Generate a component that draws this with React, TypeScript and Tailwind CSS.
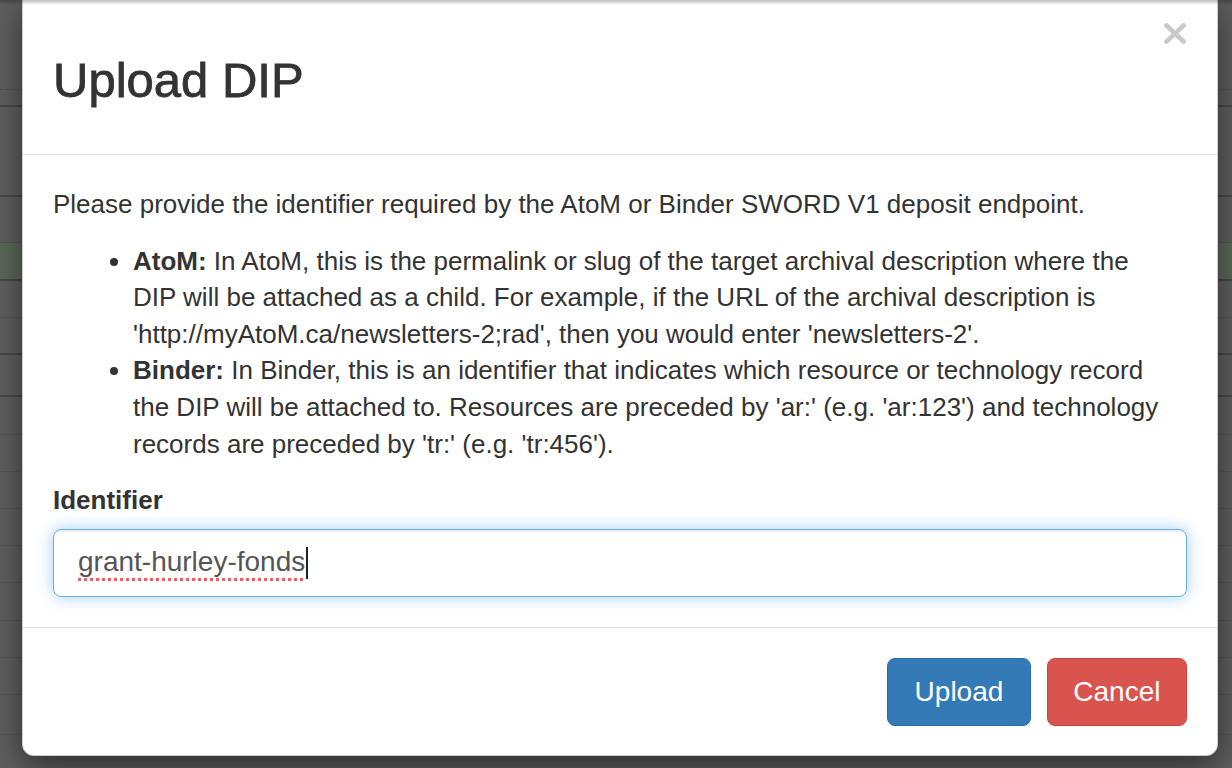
import type React from 'react';

const rows: { h: number; line: string }[] = [
  { h: 90, line: 'border-b border-dotted border-[#4a4a4a]' },
  { h: 17, line: 'border-b-2 border-[#474747]' },
  { h: 90, line: 'border-b-2 border-[#474747]' },
  { h: 46, line: 'border-b border-[#555555]' },
  { h: 38, line: 'border-b-2 border-[#474747]' },
  { h: 37, line: 'border-b border-[#555555]' },
  { h: 37, line: 'border-b-2 border-[#474747]' },
  { h: 42, line: 'border-b-2 border-[#474747]' },
  { h: 38, line: 'border-b border-[#555555]' },
  { h: 37, line: 'border-b border-[#555555]' },
  { h: 37, line: 'border-b border-[#555555]' },
  { h: 37, line: 'border-b border-[#555555]' },
  { h: 37, line: 'border-b border-[#555555]' },
  { h: 38, line: 'border-b border-[#555555]' },
  { h: 37, line: 'border-b border-[#555555]' },
  { h: 37, line: 'border-b border-[#555555]' },
  { h: 40, line: 'border-b border-[#555555]' },
];

function Backdrop() {
  return (
    <div className="absolute inset-0 flex flex-col bg-[#5e5e5e]">
      {rows.map((r, i) => (
        <div
          key={i}
          className={`${r.line} ${i === 4 ? 'bg-[#5b6759]' : ''}`}
          style={{ height: r.h }}
        />
      ))}
    </div>
  );
}

function CloseIcon() {
  return (
    <svg width="22" height="21" viewBox="0 0 22 21" aria-hidden="true">
      <path d="M2.5 2.5 L19.5 18.5 M19.5 2.5 L2.5 18.5" stroke="#c9c9c9" strokeWidth="4.6" strokeLinecap="square" />
    </svg>
  );
}

export default function App() {
  const font = { fontFamily: '"Liberation Sans", Arial, sans-serif' } as React.CSSProperties;

  return (
    <div className="relative h-[768px] w-[1232px] overflow-hidden" style={font}>
      <Backdrop />

      <div className="absolute left-[22px] top-0 w-[1196px] rounded-b-[12px] border-x border-b border-black/20 bg-white shadow-[0_10px_30px_rgba(0,0,0,0.5)] text-[#333333]">
        {/* header */}
        <div className="relative border-b border-[#e5e5e5] px-[30px] pb-[47px] pt-[54px]">
          <h3 className="text-[49px] leading-[53px] [-webkit-text-stroke:0.8px_#333333]">Upload DIP</h3>
          <button type="button" className="absolute right-[31px] top-[23px]" aria-label="Close">
            <CloseIcon />
          </button>
        </div>

        {/* body */}
        <div className="px-[30px] pb-[30px] pt-[31px] text-[26px] leading-[36.6px]">
          <p className="mb-[20px]">
            Please provide the identifier required by the AtoM or Binder SWORD V1 deposit endpoint.
          </p>
          <ul className="mb-[20px] list-disc whitespace-nowrap pl-[80px]">
            <li>
              <strong>AtoM:</strong> In AtoM, this is the permalink or slug of the target archival description where the
              <br />
              DIP will be attached as a child. For example, if the URL of the archival description is
              <br />
              'http://myAtoM.ca/newsletters-2;rad', then you would enter 'newsletters-2'.
            </li>
            <li>
              <strong>Binder:</strong> In Binder, this is an identifier that indicates which resource or technology record
              <br />
              the DIP will be attached to. Resources are preceded by 'ar:' (e.g. 'ar:123') and technology
              <br />
              records are preceded by 'tr:' (e.g. 'tr:456').
            </li>
          </ul>
          <label className="mb-[10px] block font-bold">Identifier</label>
          <div className="flex h-[68px] items-center rounded-[8px] border-[1.5px] border-[#66afe9] px-[24px] text-[28px] text-[#555555] shadow-[inset_0_2px_2px_rgba(0,0,0,0.075),0_0_16px_rgba(102,175,233,0.6)]">
            <span className="underline decoration-[#f25c5c] decoration-dotted decoration-[3px] underline-offset-[7px]">
              grant-hurley-fonds
            </span>
            <span className="ml-px h-[32px] w-[1.5px] bg-[#222222]" />
          </div>
        </div>

        {/* footer */}
        <div className="flex justify-end gap-[16px] border-t border-[#e5e5e5] px-[30px] pb-[29px] pt-[30px]">
          <button
            type="button"
            className="h-[68px] rounded-[8px] border border-[#2e6da4] bg-[#337ab7] px-[26.5px] text-[28px] text-white"
          >
            Upload
          </button>
          <button
            type="button"
            className="h-[68px] rounded-[8px] border border-[#d43f3a] bg-[#d9534f] px-[25.5px] text-[28px] text-white"
          >
            Cancel
          </button>
        </div>
      </div>

      <div className="absolute inset-x-0 top-0 h-[5px] bg-gradient-to-b from-black/25 to-transparent" />
    </div>
  );
}
